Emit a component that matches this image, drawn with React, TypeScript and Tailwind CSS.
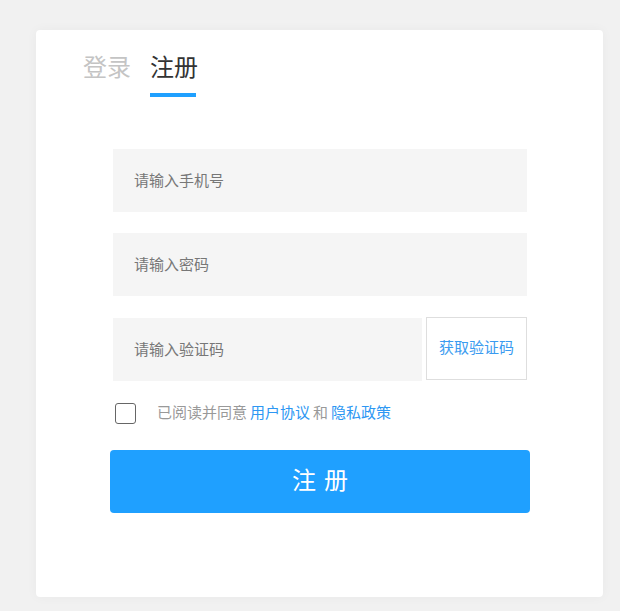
import React from 'react';

const font = { fontFamily: '"Liberation Sans", "Noto Sans CJK SC", sans-serif' };

export default function App() {
  return (
    <div className="min-h-[611px] w-[620px] bg-[#f1f1f1] pt-[30px] pl-[36px]" style={font}>
      <div className="w-[567px] h-[567px] bg-white rounded-[4px] shadow-[0_0_12px_rgba(0,0,0,0.04)]">
        {/* Tabs */}
        <div className="flex gap-[19px] pl-[47px] pt-[18px]">
          <div className="text-[24px] leading-[40px] text-[#c4c4c4] pb-[7px]">登录</div>
          <div className="flex flex-col">
            <div className="text-[24px] leading-[40px] text-[#333]">注册</div>
            <div className="h-[4px] w-[46px] bg-[#1fa0ff] mt-[5px]" />
          </div>
        </div>

        {/* Form */}
        <div className="flex flex-col pl-[77px] pt-[52px]">
          <input
            className="w-[414px] h-[63px] bg-[#f5f5f5] px-[21px] text-[15px] text-[#333] outline-none placeholder:text-[#777]"
            placeholder="请输入手机号"
          />
          <input
            type="password"
            className="w-[414px] h-[63px] bg-[#f5f5f5] px-[21px] text-[15px] text-[#333] outline-none placeholder:text-[#777] mt-[21px]"
            placeholder="请输入密码"
          />
          <div className="flex items-center mt-[22px] w-[414px]">
            <input
              className="w-[309px] h-[63px] bg-[#f5f5f5] px-[21px] text-[15px] text-[#333] outline-none placeholder:text-[#777]"
              placeholder="请输入验证码"
            />
            <button className="ml-[4px] w-[101px] h-[63px] border border-[#dedede] bg-white text-[15px] text-[#3a9bf0] -translate-y-[1px]">
              获取验证码
            </button>
          </div>
          <div className="flex items-center mt-[21px] pl-[2px]">
            <span className="w-[21px] h-[21px] border border-[#666] rounded-[3px]" />
            <div className="ml-[21px] flex gap-[3px] text-[15px] text-[#999]">
              <span>已阅读并同意</span>
              <span className="text-[#2d97f3]">用户协议</span>
              <span>和</span>
              <span className="text-[#2d97f3]">隐私政策</span>
            </div>
          </div>
        </div>

        <div className="pl-[74px] pt-[25px]">
          <button className="w-[420px] h-[63px] rounded-[4px] bg-[#1fa0ff] text-white text-[24px] tracking-[8px] pl-[8px]">
            注册
          </button>
        </div>
      </div>
    </div>
  );
}
